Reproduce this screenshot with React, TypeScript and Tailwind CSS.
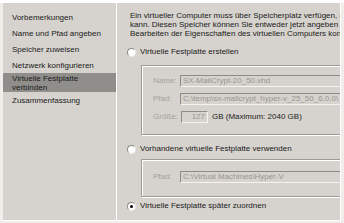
import React from 'react';

const steps = [
  { label: 'Vorbemerkungen', h: 'h-[16px]' },
  { label: 'Name und Pfad angeben', h: 'h-[16px]' },
  { label: 'Speicher zuweisen', h: 'h-[16px]' },
  { label: 'Netzwerk konfigurieren', h: 'h-[15px]' },
];

function Radio({ checked = false }: { checked?: boolean }) {
  return (
    <span className="relative flex h-[9px] w-[9px] shrink-0 items-center justify-center rounded-full border border-[#8a8884] border-b-[#e8e6e2] border-r-[#e8e6e2] bg-white">
      {checked && <span className="h-[3px] w-[3px] rounded-full bg-black" />}
    </span>
  );
}

function Field({ value, className = '' }: { value: string; className?: string }) {
  return (
    <div className={`flex h-[12px] shrink-0 items-center whitespace-nowrap border border-[#8e8c88] border-b-[#f4f3f0] border-r-[#f4f3f0] bg-[#d6d3ce] px-[2px] text-[#97958f] ${className}`}>
      {value}
    </div>
  );
}

export default function App() {
  return (
    <div className="flex h-[223px] w-[344px] flex-col overflow-hidden bg-[#efeeeb] font-['Liberation_Sans',Arial,sans-serif] text-[8px] text-[#1a1a1a]">
      <div className="h-[3px] shrink-0 bg-white" />
      <div className="flex flex-1 pb-[2px] pl-[3px] pr-[3px]">
        <div className="flex w-full border-b border-r border-white bg-[#d6d3ce]">
          {/* wizard steps */}
          <div className="flex w-[113px] shrink-0 flex-col pt-[7px]">
            {steps.map(s => (
              <div key={s.label} className={`flex items-center whitespace-nowrap pl-[9px] ${s.h}`}>
                {s.label}
              </div>
            ))}
            <div className="flex h-[19px] flex-col justify-center bg-[#8f8e8b] pl-[9px] leading-[9px]">
              <span>Virtuelle Festplatte</span>
              <span>verbinden</span>
            </div>
            <div className="flex h-[18px] items-center pl-[9px]">Zusammenfassung</div>
          </div>
          <div className="w-px shrink-0 bg-white" />

          {/* page */}
          <div className="flex min-w-0 flex-1 flex-col overflow-hidden pl-[10px] pt-[8px]">
            <div className="whitespace-nowrap pl-[3px] leading-[9px]">
              <p>Ein virtueller Computer muss über Speicherplatz verfügen, damit ein Betriebssystem installiert werden</p>
              <p>kann. Diesen Speicher können Sie entweder jetzt angeben oder später durch</p>
              <p>Bearbeiten der Eigenschaften des virtuellen Computers konfigurieren.</p>
            </div>

            <label className="mt-[9px] flex h-[10px] items-center gap-[4px] whitespace-nowrap">
              <Radio />
              <span>Virtuelle Festplatte erstellen</span>
            </label>

            <div className="ml-[14px] mt-[8px] flex h-[70px] w-[260px] shrink-0 flex-col gap-[6px] border border-[#9d9b96] pl-[11px] pt-[9px] shadow-[inset_1px_1px_0_#fff,1px_1px_0_#fff]">
              <div className="flex items-center">
                <span className="w-[28px] text-[#a3a19b]">Name:</span>
                <Field value="SX-MailCrypt-20_50.vhd" className="w-[220px]" />
              </div>
              <div className="flex items-center">
                <span className="w-[28px] text-[#a3a19b]">Pfad:</span>
                <Field value="C:\temp\sx-mailcrypt_hyper-v_25_50_6.0.0\" className="w-[220px]" />
              </div>
              <div className="flex items-center whitespace-nowrap">
                <span className="w-[28px] text-[#a3a19b]">Größe:</span>
                <Field value="127" className="w-[27px] justify-end" />
                <span className="ml-[4px]">GB (Maximum: 2040 GB)</span>
              </div>
            </div>

            <label className="mt-[9px] flex h-[10px] items-center gap-[4px] whitespace-nowrap">
              <Radio />
              <span>Vorhandene virtuelle Festplatte verwenden</span>
            </label>

            <div className="ml-[14px] mt-[5px] flex h-[38px] w-[260px] shrink-0 items-start border border-[#9d9b96] pl-[11px] pt-[11px] shadow-[inset_1px_1px_0_#fff,1px_1px_0_#fff]">
              <span className="flex h-[12px] w-[29px] items-center text-[#a3a19b]">Pfad:</span>
              <Field value="C:\Virtual Machines\Hyper-V" className="w-[220px]" />
            </div>

            <label className="mt-[4px] flex h-[10px] items-center gap-[4px] whitespace-nowrap">
              <Radio checked />
              <span>Virtuelle Festplatte später zuordnen</span>
            </label>
          </div>
        </div>
      </div>
    </div>
  );
}
